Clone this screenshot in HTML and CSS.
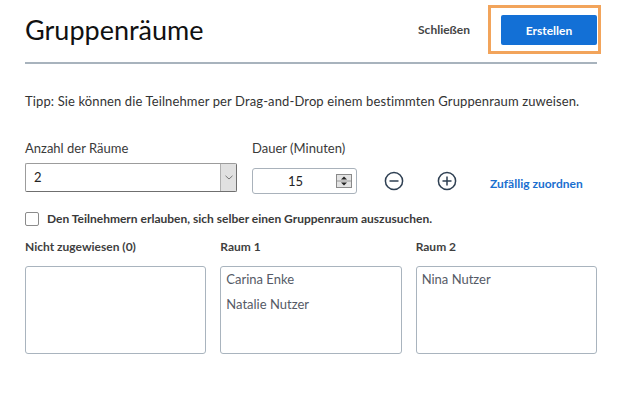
FILE: index.html
```html
<!DOCTYPE html>
<html lang="de">
<head>
<meta charset="utf-8">
<title>Gruppenräume</title>
<link rel="stylesheet" href="styles.css">
</head>
<body>
<div class="page">
  <header class="header">
    <h1 class="title">Gruppenräume</h1>
    <div class="actions">
      <span class="close">Schließen</span>
      <span class="highlight"><button class="create">Erstellen</button></span>
    </div>
  </header>

  <p class="tip">Tipp: Sie können die Teilnehmer per Drag-and-Drop einem bestimmten Gruppenraum zuweisen.</p>

  <div class="controls">
    <div class="field field-rooms">
      <div class="label">Anzahl der Räume</div>
      <div class="select">
        <span class="select-value">2</span>
        <span class="select-arrow">
          <svg width="8" height="5" viewBox="0 0 8 5"><path d="M0.5 0.8 L4 4 L7.5 0.8" fill="none" stroke="#777" stroke-width="1"/></svg>
        </span>
      </div>
    </div>
    <div class="field field-duration">
      <div class="label">Dauer (Minuten)</div>
      <div class="number">
        <span class="number-value">15</span>
        <span class="spinner">
          <svg width="16" height="14" viewBox="0 0 16 14">
            <rect x="0.5" y="0.5" width="15" height="13" fill="#e3e3e3" stroke="#8a8a8a"/>
            <line x1="1" y1="7" x2="15" y2="7" stroke="#9a9a9a"/>
            <path d="M5 5.5 L8 2.5 L11 5.5 Z" fill="#222"/>
            <path d="M5 8.5 L8 11.5 L11 8.5 Z" fill="#222"/>
          </svg>
        </span>
      </div>
    </div>
    <div class="round-btns">
      <svg class="round" width="20" height="20" viewBox="0 0 20 20"><circle cx="10" cy="10" r="8.6" fill="none" stroke="#2e3f52" stroke-width="1.5"/><line x1="5.5" y1="10" x2="14.5" y2="10" stroke="#2e3f52" stroke-width="1.5"/></svg>
      <svg class="round" width="20" height="20" viewBox="0 0 20 20"><circle cx="10" cy="10" r="8.6" fill="none" stroke="#2e3f52" stroke-width="1.5"/><line x1="5.5" y1="10" x2="14.5" y2="10" stroke="#2e3f52" stroke-width="1.5"/><line x1="10" y1="5.5" x2="10" y2="14.5" stroke="#2e3f52" stroke-width="1.5"/></svg>
    </div>
    <a class="random">Zufällig zuordnen</a>
  </div>

  <label class="check-row">
    <span class="checkbox"></span>
    <span class="check-label">Den Teilnehmern erlauben, sich selber einen Gruppenraum auszusuchen.</span>
  </label>

  <div class="rooms">
    <div class="room">
      <div class="room-title">Nicht zugewiesen (0)</div>
      <div class="room-box"></div>
    </div>
    <div class="room">
      <div class="room-title">Raum 1</div>
      <div class="room-box">
        <div class="person">Carina Enke</div>
        <div class="person">Natalie Nutzer</div>
      </div>
    </div>
    <div class="room">
      <div class="room-title">Raum 2</div>
      <div class="room-box">
        <div class="person">Nina Nutzer</div>
      </div>
    </div>
  </div>
</div>
</body>
</html>
```

FILE: styles.css
```css
* { box-sizing: border-box; }

html, body {
  margin: 0;
  padding: 0;
  background: #ffffff;
}

body {
  font-family: Lato, "Noto Sans", "Liberation Sans", sans-serif;
  color: #333333;
}

.page {
  width: 632px;
  padding: 5px 35px 0 25px;
}

.header {
  display: flex;
  align-items: center;
  justify-content: space-between;
  padding-bottom: 8px;
  border-bottom: 2px solid #a8b3bd;
}

.title {
  margin: 0;
  font-size: 27px;
  line-height: 32px;
  font-weight: 400;
  color: #111111;
}

.actions {
  display: flex;
  align-items: center;
  gap: 18px;
  margin-right: -4px;
}

.close {
  font-size: 12px;
  line-height: 16px;
  font-weight: 700;
  color: #454545;
}

.highlight {
  display: block;
  border: 3px solid #f2a45b;
  padding: 7px 1px 6px 10px;
}

.create {
  display: block;
  width: 96px;
  height: 30px;
  border: none;
  border-radius: 2px;
  background: #1370d6;
  color: #ffffff;
  font-family: inherit;
  font-size: 12px;
  font-weight: 700;
  padding: 0;
}

.tip {
  margin: 29px 0 0;
  font-size: 13px;
  line-height: 16px;
  letter-spacing: 0.12px;
  color: #333333;
}

.controls {
  display: flex;
  align-items: flex-start;
  margin-top: 31px;
}

.label {
  font-size: 13px;
  line-height: 16px;
  color: #3a3a3a;
}

.field-rooms { width: 212px; }
.field-duration { margin-left: 15px; }

.select {
  display: flex;
  height: 29px;
  margin-top: 7px;
  border: 1px solid #9c9c9c;
  border-right-color: #6f6f6f;
  border-bottom-color: #6f6f6f;
  border-radius: 2px;
  background: #ffffff;
}

.select-value {
  flex: 1;
  padding-left: 8px;
  font-size: 13px;
  line-height: 27px;
  color: #222222;
}

.select-arrow {
  width: 16px;
  display: flex;
  align-items: center;
  justify-content: center;
  background: #e1e1e1;
  border-left: 1px solid #b0b0b0;
}

.number {
  display: flex;
  align-items: center;
  width: 105px;
  height: 26px;
  margin-top: 12px;
  border: 1px solid #a9b2bb;
  border-radius: 3px;
}

.number-value {
  flex: 1;
  text-align: center;
  font-size: 13px;
  color: #222222;
  padding-left: 2px;
}

.spinner {
  display: flex;
  margin-right: 4px;
}

.round-btns {
  display: flex;
  gap: 33px;
  margin-top: 31px;
  margin-left: 27px;
}

.round { display: block; }

.random {
  margin-top: 36px;
  margin-left: 33px;
  font-size: 12px;
  line-height: 16px;
  font-weight: 700;
  color: #1a6fcf;
}

.check-row {
  display: flex;
  align-items: center;
  margin-top: 18px;
}

.checkbox {
  width: 14px;
  height: 14px;
  border: 1px solid #8b8b8b;
  border-radius: 2px;
  background: #ffffff;
}

.check-label {
  margin-left: 8px;
  font-size: 12px;
  line-height: 14px;
  font-weight: 700;
  color: #3a3a3a;
}

.rooms {
  display: grid;
  grid-template-columns: repeat(3, 1fr);
  column-gap: 14px;
  margin-top: 13px;
}

.room-title {
  font-size: 12px;
  line-height: 16px;
  font-weight: 700;
  color: #3f3f3f;
}

.room-box {
  height: 88px;
  margin-top: 11px;
  border: 1px solid #a9b4be;
  border-radius: 3px;
  padding: 0 5px;
}

.person {
  font-size: 13px;
  line-height: 25px;
  color: #555a66;
}
```
